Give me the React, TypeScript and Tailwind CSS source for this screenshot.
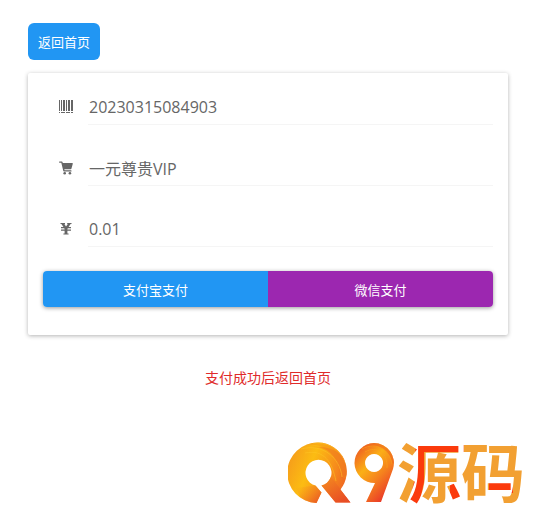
import React from "react";

type Field = { id: string; label: string; value: string; icon: React.ReactNode };

function BarcodeIcon() {
  return (
    <svg width="14" height="14" viewBox="0 0 14 14" fill="currentColor" aria-hidden="true">
      <path d="M0 0h1v11H0zM2 0h1v11H2zM4 0h2v11H4zM7 0h1v11H7zM9 0h2v11H9zM12 0h2v11h-2zM0 12h1v1H0zM2 12h4v1H2zM7 12h4v1H7zM12 12h2v1h-2z" />
    </svg>
  );
}

function CartIcon() {
  return (
    <svg width="14" height="14" viewBox="0 0 14 14" fill="currentColor" aria-hidden="true">
      <path d="M.6.4h2.300c.3 0 .5.2.6.5l.3 1.200h9.500c.4 0 .6.3.5.7l-1.400 5c-.1.3-.3.5-.7.5H5.300l.3 1h6.300c.9 0 .9 1.300 0 1.300H5c-.4 0-.6-.2-.7-.5L2.300 1.700H.6C-.2 1.700-.2.4.6.4z" />
      <circle cx="5.700" cy="12.200" r="1.300" />
      <circle cx="10.900" cy="12.200" r="1.300" />
    </svg>
  );
}

function YenIcon() {
  return (
    <svg width="14" height="14" viewBox="0 0 14 14" fill="currentColor" aria-hidden="true">
      <path d="M1.500 1h4.500v1h-.6L7 4.500 8.800 2h-.6V1h4.300v1h-.9L9.600 5H12v1.300H8.800l-.4.7v.5H12v1.300H8.400v2.700h1.200v1H4.400v-1h1.200V8.800H2V7.500h3.600V7l-.4-.7H2V5h2.400L2.400 2h-.9z" />
    </svg>
  );
}

function Logo() {
  return (
    <svg width="240" height="98" viewBox="288 420 240 98" role="img" aria-label="Q9源码">
      <defs>
        <linearGradient id="ring" x1="0" y1="0.3" x2="1" y2="0.7">
          <stop offset="0" stopColor="#f59a1c" />
          <stop offset="0.35" stopColor="#fcbc12" />
          <stop offset="0.7" stopColor="#f68a1c" />
          <stop offset="1" stopColor="#ed5a25" />
        </linearGradient>
        <linearGradient id="tail" x1="0" y1="0" x2="0.5" y2="1">
          <stop offset="0" stopColor="#f59120" />
          <stop offset="1" stopColor="#e74a25" />
        </linearGradient>
        <linearGradient id="foot" x1="0" y1="0" x2="1" y2="0.7">
          <stop offset="0" stopColor="#f9a51a" stopOpacity="0" />
          <stop offset="1" stopColor="#e95525" />
        </linearGradient>
        <linearGradient id="small" x1="0.1" y1="0.2" x2="0.7" y2="1">
          <stop offset="0" stopColor="#f06a20" />
          <stop offset="0.3" stopColor="#fbb016" />
          <stop offset="0.6" stopColor="#f5801e" />
          <stop offset="1" stopColor="#e8302a" />
        </linearGradient>
        <pattern id="ink" patternUnits="userSpaceOnUse" x="388" y="420" width="144" height="100">
          <rect width="144" height="100" fill="#f2a032" />
          <path d="M28 16H76V32H36V62L30 90H19L26 62z" fill="#fb3a0c" />
          <path d="M62 64H76V90H62zM101 62H125V73H101z" fill="#fb3a0c" />
        </pattern>
        <clipPath id="ringClip">
          <path d="M318.500 442.500a29 29 0 0 1 22 47l10 13h-15l-14-17a13 13 0 1 0-6 0l6 7-5 10.500A29.500 29.500 0 1 1 318.500 442.500z" />
        </clipPath>
        <clipPath id="smallClip">
          <path
            clipRule="evenodd"
            d="M374 443a20 20 0 0 1 19 26l-12 33h-15l9-19a20 20 0 0 1-1-40zM374 454a9 9 0 1 0 .1 0z"
          />
        </clipPath>
      </defs>
      <g clipPath="url(#ringClip)">
        <rect x="286" y="440" width="66" height="64" fill="url(#ring)" />
        <path d="M300 446c22-6 36 8 42 31l10 3V440h-30z" fill="#f4941b" opacity="0.4" />
        <path d="M312 447c20 0 26 12 29 31l9-4c-1-16-14-29-38-27z" fill="#ee6f20" opacity="0.4" />
        <path d="M305 453c20-4 27 10 31 28M301 449c22-6 39 9 41 28M313 443c18-1 29 8 34 24" fill="none" stroke="#ffc727" strokeWidth="1" opacity="0.5" />
        <path d="M329 474l23 30h-18l-16-21z" fill="url(#tail)" opacity="0.8" />
        <path d="M296 488l22-3 6 7-7 12h-14z" fill="url(#foot)" />
      </g>
      <g clipPath="url(#smallClip)">
        <rect x="352" y="442" width="44" height="62" fill="url(#small)" />
        <path d="M363 449c14-7 27 0 29 15l6-2v-22h-35z" fill="#ee651f" opacity="0.6" />
        <path d="M365 452c12-7 23 1 22 16M362 449c15-8 28 1 30 15" fill="none" stroke="#fba51c" strokeWidth="1" opacity="0.6" />
      </g>
      <text
        x="397"
        y="497"
        fill="url(#ink)"
        className="font-['Noto_Sans_CJK_SC',sans-serif] text-[64px] font-bold"
      >
        源码
      </text>
    </svg>
  );
}

const fields: Field[] = [
  { id: "order", label: "订单号", value: "20230315084903", icon: <BarcodeIcon /> },
  { id: "product", label: "商品", value: "一元尊贵VIP", icon: <CartIcon /> },
  { id: "price", label: "金额", value: "0.01", icon: <YenIcon /> },
];

export default function App() {
  return (
    <main className="bg-white pr-[27px] pl-7 pt-[23px] font-['Open_Sans','Noto_Sans_CJK_SC',sans-serif] text-[#666]">
      <button type="button" className="block h-[37px] rounded-md bg-[#2196f3] px-[10px] text-[13px] leading-5 text-white">
        返回首页
      </button>

      <form
        className="mt-[13px] rounded-xs bg-white px-[15px] pt-[18px] pb-7 shadow-[0_1px_4px_rgba(0,0,0,0.3)]"
        onSubmit={(e) => e.preventDefault()}
      >
        <div className="flex flex-col gap-[27px]">
          {fields.map((f) => (
            <div key={f.id} className="flex h-[34px]">
              <label htmlFor={f.id} aria-label={f.label} className="flex w-[45px] shrink-0 justify-center pt-[9px]">
                {f.icon}
              </label>
              <input
                id={f.id}
                readOnly
                defaultValue={f.value}
                className="h-full min-w-0 flex-1 border-b border-[#f5f5f5] bg-transparent px-px pb-[2px] text-base outline-none"
              />
            </div>
          ))}
        </div>
        <div className="mt-6 flex h-9 overflow-hidden rounded-sm text-[13px] text-white shadow-[0_1px_4px_rgba(0,0,0,0.4)]">
          <button type="button" className="flex-1 bg-[#2196f3] pt-[3px]">支付宝支付</button>
          <button type="button" className="flex-1 bg-[#9c27b0] pt-[3px]">微信支付</button>
        </div>
      </form>

      <p className="mt-8 text-center text-sm leading-[22px] text-[#e02b2b]">支付成功后返回首页</p>

      <footer className="-mr-5 mt-[31px] flex justify-end">
        <Logo />
      </footer>
    </main>
  );
}
